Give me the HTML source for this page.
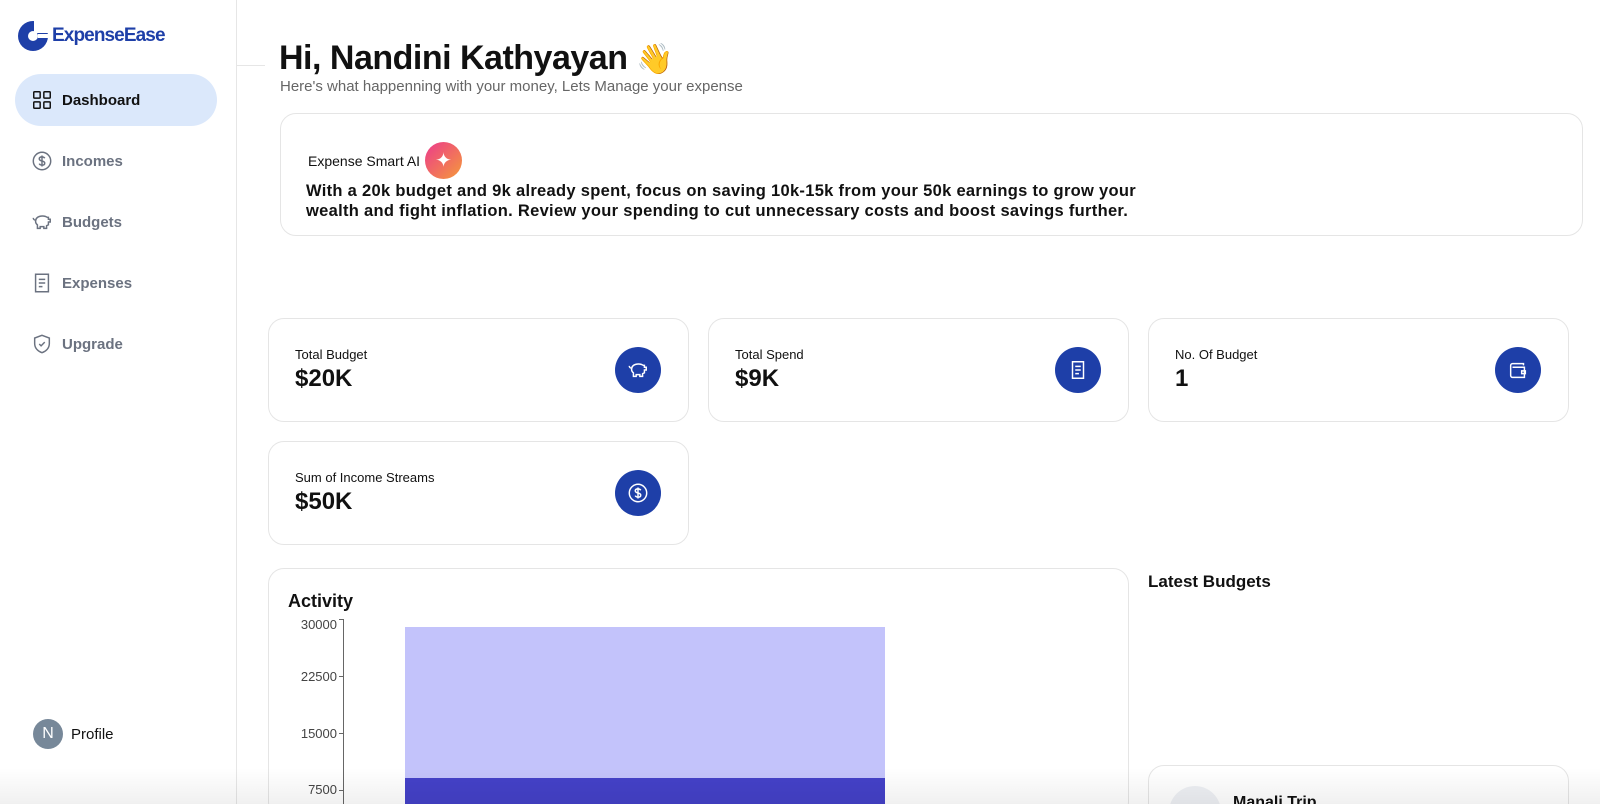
<!DOCTYPE html>
<html><head><meta charset="utf-8"><style>
*{box-sizing:border-box;margin:0;padding:0}
html,body{width:1600px;height:804px;overflow:hidden}
body{background:#fff;font-family:"Liberation Sans",sans-serif;color:#111;position:relative}
.sb{position:absolute;left:0;top:0;width:237px;height:804px;border-right:1px solid #e6e6e6}
.logo{position:absolute;left:17px;top:20px;display:flex;align-items:center;gap:3px;color:#1e3fa8;font-weight:bold;font-size:19px;letter-spacing:-0.9px}
.nav{position:absolute;left:15px;width:202px;height:52px;border-radius:26px;display:flex;align-items:center;padding-left:16px;gap:9px;font-size:15px;color:#6b7280;font-weight:bold}
.nav.a{background:#dbe8fb;color:#111}
.nav svg{width:22px;height:22px;fill:none;stroke:currentColor;stroke-width:1.6}
.card{position:absolute;border:1px solid #e5e5e5;border-radius:16px;background:#fff;overflow:hidden}
.stat .l{position:absolute;left:26px;top:28px;font-size:13px}
.stat .v{position:absolute;left:26px;top:46px;font-size:24px;font-weight:bold}
.ic{position:absolute;right:27px;top:28px;width:46px;height:46px;border-radius:50%;background:#1e3fa8;display:flex;align-items:center;justify-content:center}
.ic svg{width:22px;height:22px;fill:none;stroke:#fff;stroke-width:1.6}
.ax{position:absolute;font-size:13px;color:#444;text-align:right;width:60px}
.shade{position:absolute;left:0;right:0;bottom:0;height:36px;background:linear-gradient(rgba(0,0,0,0),rgba(0,0,0,0.06))}
</style></head><body>
<div class="sb">
 <div class="logo"><svg width="32" height="32" viewBox="0 0 32 32"><circle cx="16" cy="16" r="15" fill="#1e3fa8"/><rect x="17" y="0" width="16" height="13" fill="#fff"/><rect x="21" y="14" width="12" height="4" fill="#fff"/><circle cx="16" cy="16" r="5" fill="#fff"/></svg>ExpenseEase</div>
 <div class="nav a" style="top:74px"><svg viewBox="0 0 24 24"><rect x="3" y="3" width="7" height="7" rx="1"/><rect x="14" y="3" width="7" height="7" rx="1"/><rect x="3" y="14" width="7" height="7" rx="1"/><rect x="14" y="14" width="7" height="7" rx="1"/></svg>Dashboard</div>
 <div class="nav" style="top:135px"><svg viewBox="0 0 24 24"><circle cx="12" cy="12" r="9.5"/><path d="M15 9c-.5-1-1.5-1.5-3-1.5-2 0-3 1-3 2.2s1 1.8 3 2.3 3 1.1 3 2.3-1 2.2-3 2.2c-1.5 0-2.6-.6-3-1.6M12 6v12"/></svg>Incomes</div>
 <div class="nav" style="top:196px"><svg viewBox="0 0 24 24"><path d="M19 7h-1l-2-1c-2-.6-5-.6-7 0-3 1-4 3.5-4 5.5 0 1.5.8 2.8 2 3.6V19h3v-2h4v2h3v-3l2-1v-3h2V9h-2zM5 10c-1.5 0-2.5-1-2.5-2.5"/></svg>Budgets</div>
 <div class="nav" style="top:257px"><svg viewBox="0 0 24 24"><path d="M5 2.5h14v19H5zM8.5 8h7M8.5 12h7M8.5 16h4"/></svg>Expenses</div>
 <div class="nav" style="top:318px"><svg viewBox="0 0 24 24"><path d="M12 2.5l8 3v6c0 5-3.5 8.5-8 10-4.5-1.5-8-5-8-10v-6z"/><path d="M9 12l2 2 4-4"/></svg>Upgrade</div>
 <div style="position:absolute;left:33px;top:719px;display:flex;align-items:center;gap:8px;font-size:15px"><div style="width:30px;height:30px;border-radius:50%;background:#778899;color:#fff;display:flex;align-items:center;justify-content:center;font-size:16px">N</div>Profile</div>
</div>
<div style="position:absolute;left:237px;top:65px;width:28px;border-top:1px solid #e6e6e6"></div>
<div style="position:absolute;left:279px;top:34px;font-size:34px;font-weight:bold;letter-spacing:-0.5px">Hi, Nandini Kathyayan <span style="font-family:'Noto Sans CJK JP',sans-serif;font-size:30px">👋</span></div>
<div style="position:absolute;left:280px;top:78px;font-size:15px;color:#666">Here's what happenning with your money, Lets Manage your expense</div>
<div class="card" style="left:280px;top:113px;width:1303px;height:123px">
 <div style="position:absolute;left:27px;top:28px;font-size:14px;display:flex;align-items:center;gap:5px">Expense Smart AI <div style="width:37px;height:37px;border-radius:50%;background:linear-gradient(135deg,#ec3a8c,#f59a3a);display:flex;align-items:center;justify-content:center;color:#fff;font-size:20px">✦</div></div>
 <div style="position:absolute;left:25px;top:67px;width:850px;font-size:16.5px;font-weight:bold;line-height:20px;letter-spacing:0.3px;color:#111">With a 20k budget and 9k already spent, focus on saving 10k-15k from your 50k earnings to grow your wealth and fight inflation. Review your spending to cut unnecessary costs and boost savings further.</div>
</div>
<div class="card stat" style="left:268px;top:318px;width:421px;height:104px"><div class="l">Total Budget</div><div class="v">$20K</div><div class="ic"><svg viewBox="0 0 24 24"><path d="M19 7h-1l-2-1c-2-.6-5-.6-7 0-3 1-4 3.5-4 5.5 0 1.5.8 2.8 2 3.6V19h3v-2h4v2h3v-3l2-1v-3h2V9h-2zM5 10c-1.5 0-2.5-1-2.5-2.5"/></svg></div></div>
<div class="card stat" style="left:708px;top:318px;width:421px;height:104px"><div class="l">Total Spend</div><div class="v">$9K</div><div class="ic"><svg viewBox="0 0 24 24"><path d="M6 3h12v18H6zM9 8h6M9 12h6M9 16h4"/></svg></div></div>
<div class="card stat" style="left:1148px;top:318px;width:421px;height:104px"><div class="l">No. Of Budget</div><div class="v">1</div><div class="ic"><svg viewBox="0 0 24 24"><path d="M18 7V5H6a2 2 0 0 0-2 2v11a2 2 0 0 0 2 2h13V9H6M16 13h4v3h-4z"/></svg></div></div>
<div class="card stat" style="left:268px;top:441px;width:421px;height:104px"><div class="l">Sum of Income Streams</div><div class="v">$50K</div><div class="ic"><svg viewBox="0 0 24 24"><circle cx="12" cy="12" r="9.5"/><path d="M15 9c-.5-1-1.5-1.5-3-1.5-2 0-3 1-3 2.2s1 1.8 3 2.3 3 1.1 3 2.3-1 2.2-3 2.2c-1.5 0-2.6-.6-3-1.6M12 6v12"/></svg></div></div>
<div class="card" style="left:268px;top:568px;width:861px;height:250px">
 <div style="position:absolute;left:19px;top:22px;font-size:18px;font-weight:bold">Activity</div>
</div>
<div class="ax" style="left:277px;top:617px">30000</div>
<div class="ax" style="left:277px;top:669px">22500</div>
<div class="ax" style="left:277px;top:726px">15000</div>
<div class="ax" style="left:277px;top:782px">7500</div>
<div style="position:absolute;left:343px;top:619px;width:1px;height:190px;background:#666"></div>
<div style="position:absolute;left:339px;top:619px;width:5px;height:1px;background:#666"></div>
<div style="position:absolute;left:339px;top:676px;width:5px;height:1px;background:#666"></div>
<div style="position:absolute;left:339px;top:733px;width:5px;height:1px;background:#666"></div>
<div style="position:absolute;left:339px;top:790px;width:5px;height:1px;background:#666"></div>
<div style="position:absolute;left:405px;top:627px;width:480px;height:151px;background:#c3c3fb"></div>
<div style="position:absolute;left:405px;top:778px;width:480px;height:30px;background:#4441c8"></div>
<div style="position:absolute;left:1148px;top:572px;font-size:17px;font-weight:bold">Latest Budgets</div>
<div class="card" style="left:1148px;top:765px;width:421px;height:60px">
 <div style="position:absolute;left:20px;top:20px;width:52px;height:52px;border-radius:50%;background:#eef0f4"></div>
 <div style="position:absolute;left:84px;top:28px;font-size:16px;font-weight:bold">Manali Trip</div>
</div>
<div class="shade"></div>
</body></html>
